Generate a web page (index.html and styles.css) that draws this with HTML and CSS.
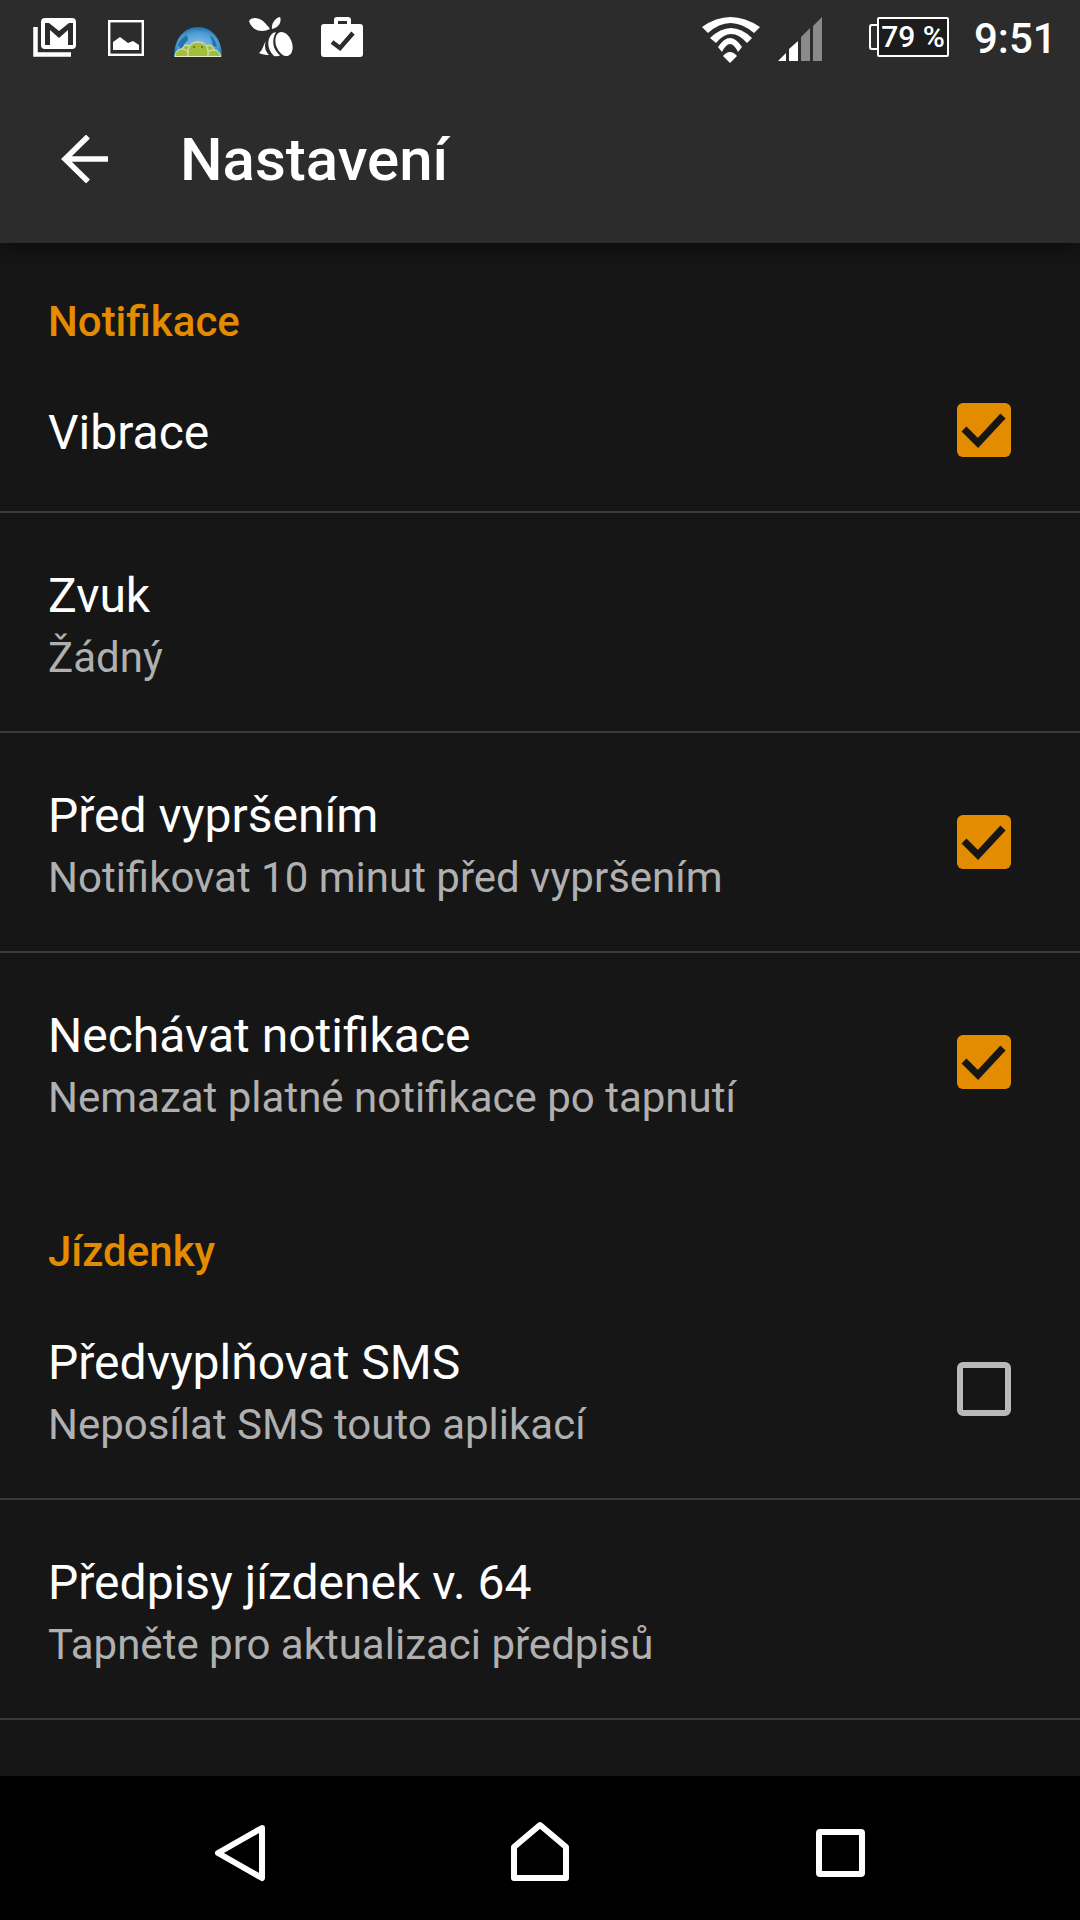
FILE: index.html
```html
<!DOCTYPE html>
<html>
<head>
    <title>Nastavení</title>
    <link rel="stylesheet" href="styles.css">
</head>
<body>
    <div class="phone">
        <header class="topbar">
            <div class="status">
                <svg class="ic-mail" width="44" height="40" viewBox="0 0 44 40">
                    <path d="M2.5 9v27.5H38" fill="none" stroke="#fff" stroke-width="4.5"/>
                    <rect x="8" y="0" width="35" height="31" rx="4" fill="#fff"/>
                    <path d="M12 27V5h4l10 8 10-8h4v22h-5V12l-9 8-9-8v15z" fill="#2c2c2c"/>
                </svg>
                <svg class="ic-image" width="36" height="36" viewBox="0 0 36 36">
                    <rect x="1.2" y="1.2" width="33.6" height="33.6" fill="none" stroke="#fff" stroke-width="2.4"/>
                    <path d="M5 30v-8l7-5 8 6 5-2 6 4v5z" fill="#fff"/>
                </svg>
                <svg class="ic-globe" width="48" height="30" viewBox="0 0 48 30">
                    <defs>
                        <radialGradient id="dome" cx="50%" cy="60%" r="60%">
                            <stop offset="0%" stop-color="#8cc3e6"/>
                            <stop offset="70%" stop-color="#4a9ad2"/>
                            <stop offset="100%" stop-color="#1b6eae"/>
                        </radialGradient>
                    </defs>
                    <path d="M0 30C0 12 10 0 24 0s24 12 24 30z" fill="url(#dome)"/>
                    <path d="M4 18c2-5 5-8 9-10l1 5-4 4-2 6zM36 8c4 3 6 7 7 12l-4-1-1-5z" fill="#2a6fa6"/>
                    <g fill="#a4bd3c" stroke="#e4ecc6" stroke-width="1">
                        <path d="M8 30V23a5 5 0 0 1 10 0v7zM30 30V23a5 5 0 0 1 10 0v7z"/>
                        <path d="M1 30c0-5 3-8 7-8s7 3 7 8zM33 30c0-5 3-7 6.500-7s7 2 7 7z"/>
                        <path d="M14 30V24.500c0-6 4-9.500 10-9.500s10 3.500 10 9.500V30z"/>
                    </g>
                    <path d="M1 29.500h46" stroke="#e4ecc6" stroke-width="1"/>
                    <circle cx="20" cy="20" r="1" fill="#5b6d1e"/>
                    <circle cx="28" cy="20" r="1" fill="#5b6d1e"/>
                </svg>
                <svg class="ic-bee" width="46" height="42" viewBox="0 0 46 42">
                    <path d="M1 5C3 1 10 1 15 5c3 3 6 6 7 8C14 17 4 15 1 5z" fill="#fff"/>
                    <path d="M24 13c-1-5 3-11 8-12 2 4-1 11-8 12z" fill="#fff"/>
                    <ellipse cx="36" cy="28" rx="8" ry="12.500" transform="rotate(-20 36 28)" fill="#fff"/>
                    <path d="M25 17c-6 5-7 15 1 23 2 .5 4 .3 6-.5-7-6-9-15-4-23.500z" fill="#fff"/>
                    <path d="M11 37c4-3 4-8 7-12-2 5-1 10 3 14-3 0-7-.5-10-2z" fill="#fff"/>
                </svg>
                <svg class="ic-case" width="44" height="42" viewBox="0 0 44 42">
                    <path fill-rule="evenodd" d="M14 8V4c0-2 1-3 3-3h11c2 0 3 1 3 3v4h9c2 0 3 1 3 3v27c0 2-1 3-3 3H4c-2 0-3-1-3-3V11c0-2 1-3 3-3zm4-3v3h9V5z" fill="#fff"/>
                    <path d="M12 26l8 6 13-15" fill="none" stroke="#2c2c2c" stroke-width="4.500"/>
                </svg>
                <svg class="ic-wifi" width="60" height="49" viewBox="0 0 60 49">
                    <path d="M1 12Q29-8 59 12l-6 6Q29-2 7 18z" fill="#fff"/>
                    <path d="M9 23Q30 3 51 23l-5 5Q30 10 15 28z" fill="#fff"/>
                    <path d="M17 32Q29 14 41 32l-4 5Q29 21 21 37z" fill="#fff"/>
                    <path d="M22 41Q29 33 36 41l-7 7z" fill="#fff"/>
                </svg>
                <svg class="ic-signal" width="46" height="46" viewBox="0 0 46 46">
                    <path d="M1 45l8-8v8zM12 33l9-8v20h-9z" fill="#fff"/>
                    <path d="M24 21l9-9v33h-9zM36 10l9-9v44h-9z" fill="#8a8a8a"/>
                </svg>
                <div class="battery">
                    <span class="battery-cap"></span>
                    <span class="battery-body">79 %</span>
                </div>
                <span class="clock">9:51</span>
            </div>
            <div class="toolbar">
                <svg class="back" width="47" height="48" viewBox="0 0 47 48">
                    <path d="M27 1.500L4 24l23 22.500M4 24h43" fill="none" stroke="#fff" stroke-width="5.500"/>
                </svg>
                <h1>Nastavení</h1>
            </div>
        </header>

        <main class="list">
            <h2 class="section first">Notifikace</h2>
            <div class="row single line">
                <div class="row-text"><div class="row-title">Vibrace</div></div>
                <span class="check on"><svg width="54" height="54" viewBox="0 0 54 54"><path d="M7 26l14 14 25-27" fill="none" stroke="#161616" stroke-width="7"/></svg></span>
            </div>
            <div class="row line">
                <div class="row-text"><div class="row-title">Zvuk</div><div class="row-sub">Žádný</div></div>
            </div>
            <div class="row line">
                <div class="row-text"><div class="row-title">Před vypršením</div><div class="row-sub">Notifikovat 10 minut před vypršením</div></div>
                <span class="check on"><svg width="54" height="54" viewBox="0 0 54 54"><path d="M7 26l14 14 25-27" fill="none" stroke="#161616" stroke-width="7"/></svg></span>
            </div>
            <div class="row">
                <div class="row-text"><div class="row-title">Nechávat notifikace</div><div class="row-sub">Nemazat platné notifikace po tapnutí</div></div>
                <span class="check on"><svg width="54" height="54" viewBox="0 0 54 54"><path d="M7 26l14 14 25-27" fill="none" stroke="#161616" stroke-width="7"/></svg></span>
            </div>
            <h2 class="section">Jízdenky</h2>
            <div class="row line">
                <div class="row-text"><div class="row-title">Předvyplňovat SMS</div><div class="row-sub">Neposílat SMS touto aplikací</div></div>
                <span class="check"></span>
            </div>
            <div class="row line">
                <div class="row-text"><div class="row-title">Předpisy jízdenek v. 64</div><div class="row-sub">Tapněte pro aktualizaci předpisů</div></div>
            </div>
        </main>

        <nav class="navbar">
            <svg class="nav-back" width="52" height="58" viewBox="0 0 52 58"><path d="M48 4L4 29l44 25z" fill="none" stroke="#fff" stroke-width="6" stroke-linejoin="round"/></svg>
            <svg class="nav-home" width="58" height="60" viewBox="0 0 58 60"><path d="M3 57V26L29 4l26 22v31z" fill="none" stroke="#fff" stroke-width="6" stroke-linejoin="round"/></svg>
            <svg class="nav-recent" width="49" height="48" viewBox="0 0 49 48"><rect x="3" y="3" width="43" height="42" rx="1" fill="none" stroke="#fff" stroke-width="6"/></svg>
        </nav>
    </div>
</body>
</html>
```

FILE: styles.css
```css
body {
    margin: 0;
    background-color: #161616;
    font-family: Roboto, "Noto Sans", sans-serif;
    color: #fff;
}
.phone {
    width: 1080px;
    height: 1920px;
    display: flex;
    flex-direction: column;
    overflow: hidden;
}

/* top bar */
.topbar {
    position: relative;
    height: 243px;
    flex: none;
    background-color: #2c2c2c;
    box-shadow: 0 4px 24px rgba(0, 0, 0, 0.55);
    z-index: 1;
}
.status {
    height: 75px;
    display: flex;
    align-items: flex-start;
}
.ic-mail {
    margin: 18px 0 0 33px;
}
.ic-image {
    margin: 20px 0 0 31px;
}
.ic-globe {
    margin: 27px 0 0 30px;
}
.ic-bee {
    margin: 16px 0 0 26px;
}
.ic-case {
    margin: 16px 0 0 26px;
}
.ic-wifi {
    margin: 15px 0 0 337px;
}
.ic-signal {
    margin: 16px 0 0 16px;
}
.battery {
    margin: 17px 0 0 46px;
    display: flex;
    align-items: center;
}
.battery-cap {
    width: 6px;
    height: 22px;
    border: 2px solid #fff;
    border-right: none;
    border-radius: 3px 0 0 3px;
}
.battery-body {
    width: 68px;
    height: 36px;
    line-height: 36px;
    border: 2px solid #fff;
    border-radius: 2px;
    background-color: #1c1c1c;
    text-align: center;
    font-size: 30px;
    font-weight: 500;
}
.clock {
    margin: 15px 0 0 25px;
    font-size: 42px;
    line-height: 48px;
    font-weight: 500;
}
.toolbar {
    height: 168px;
    display: flex;
    align-items: center;
    padding-left: 61px;
}
.back {
    margin-right: 72px;
}
.toolbar h1 {
    margin: 0;
    font-size: 60px;
    font-weight: 500;
}

/* settings list */
.list {
    flex: 1;
    min-height: 0;
}
.section {
    margin: 0;
    padding: 52px 48px 0;
    height: 107px;
    box-sizing: border-box;
    font-size: 42px;
    line-height: 53px;
    font-weight: 500;
    color: #e38c00;
}
.section.first {
    height: 109px;
    padding-top: 52px;
}
.row {
    height: 220px;
    box-sizing: border-box;
    padding: 0 69px 0 48px;
    display: flex;
    align-items: center;
    justify-content: space-between;
    border-bottom: 2px solid transparent;
}
.row-text {
    padding-top: 10px;
}
.row.single {
    height: 161px;
    padding-bottom: 4px;
}
.row.single .row-text {
    padding-top: 6px;
}
.row.line {
    border-bottom-color: #3a3a3a;
}
.row-title {
    font-size: 48px;
    line-height: 62px;
}
.row-sub {
    font-size: 42px;
    line-height: 62px;
    color: #b0b0b0;
}
.check {
    width: 54px;
    height: 54px;
    box-sizing: border-box;
    border-radius: 6px;
    border: 6px solid #b9b9b9;
    flex: none;
}
.check.on {
    border: none;
    background-color: #e38c00;
}
.check svg {
    display: block;
}

/* bottom nav */
.navbar {
    height: 144px;
    box-sizing: border-box;
    padding-top: 10px;
    flex: none;
    background-color: #000;
    display: flex;
    align-items: center;
}
.nav-back {
    margin-left: 214px;
}
.nav-home {
    margin: -4px 0 0 245px;
}
.nav-recent {
    margin-left: 247px;
}
```
